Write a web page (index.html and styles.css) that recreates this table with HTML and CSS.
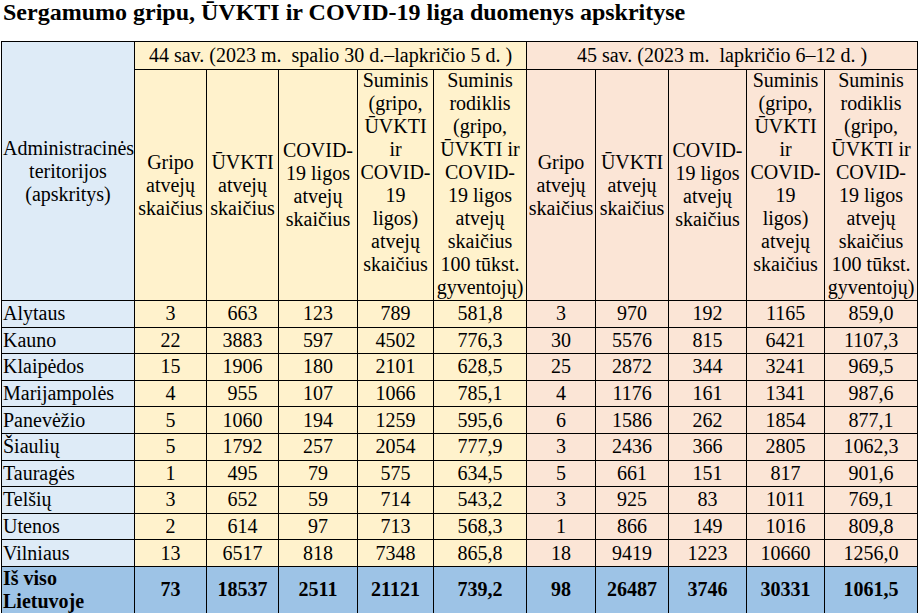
FILE: index.html
```html
<!DOCTYPE html>
<html lang="lt">
<head>
<meta charset="utf-8">
<title>Sergamumo gripu, ŪVKTI ir COVID-19 liga duomenys apskrityse</title>
<link rel="stylesheet" href="styles.css">
</head>
<body>
<div class="title">Sergamumo gripu, ŪVKTI ir COVID-19 liga duomenys apskrityse</div>
<table class="stats">
  <colgroup>
    <col class="w-reg">
    <col class="w-a"><col class="w-a"><col class="w-c"><col class="w-d"><col class="w-e">
    <col class="w-f"><col class="w-g"><col class="w-h"><col class="w-h"><col class="w-e">
  </colgroup>
  <tr class="r-week">
    <td class="reg hcell" rowspan="2">Administracinės<br>teritorijos<br>(apskritys)</td>
    <td class="w44 hcell" colspan="5">44 sav. (2023 m.&nbsp; spalio 30 d.–lapkričio 5 d. )</td>
    <td class="w45 hcell" colspan="5">45 sav. (2023 m.&nbsp; lapkričio 6–12 d. )</td>
  </tr>
  <tr class="r-head">
    <td class="w44 hcell">Gripo<br>atvejų<br>skaičius</td>
    <td class="w44 hcell">ŪVKTI<br>atvejų<br>skaičius</td>
    <td class="w44 hcell">COVID-<br>19 ligos<br>atvejų<br>skaičius</td>
    <td class="w44 hcell top"><div class="tall">Suminis<br>(gripo,<br>ŪVKTI<br>ir<br>COVID-<br>19<br>ligos)<br>atvejų<br>skaičius</div></td>
    <td class="w44 hcell top"><div class="tall">Suminis<br>rodiklis<br>(gripo,<br>ŪVKTI ir<br>COVID-<br>19 ligos<br>atvejų<br>skaičius<br>100 tūkst.<br>gyventojų)</div></td>
    <td class="w45 hcell">Gripo<br>atvejų<br>skaičius</td>
    <td class="w45 hcell">ŪVKTI<br>atvejų<br>skaičius</td>
    <td class="w45 hcell">COVID-<br>19 ligos<br>atvejų<br>skaičius</td>
    <td class="w45 hcell top"><div class="tall">Suminis<br>(gripo,<br>ŪVKTI<br>ir<br>COVID-<br>19<br>ligos)<br>atvejų<br>skaičius</div></td>
    <td class="w45 hcell top"><div class="tall">Suminis<br>rodiklis<br>(gripo,<br>ŪVKTI ir<br>COVID-<br>19 ligos<br>atvejų<br>skaičius<br>100 tūkst.<br>gyventojų)</div></td>
  </tr>
  <tr class="r-data"><td class="reg name">Alytaus</td><td class="w44">3</td><td class="w44">663</td><td class="w44">123</td><td class="w44">789</td><td class="w44">581,8</td><td class="w45">3</td><td class="w45">970</td><td class="w45">192</td><td class="w45">1165</td><td class="w45">859,0</td></tr>
  <tr class="r-data"><td class="reg name">Kauno</td><td class="w44">22</td><td class="w44">3883</td><td class="w44">597</td><td class="w44">4502</td><td class="w44">776,3</td><td class="w45">30</td><td class="w45">5576</td><td class="w45">815</td><td class="w45">6421</td><td class="w45">1107,3</td></tr>
  <tr class="r-data"><td class="reg name">Klaipėdos</td><td class="w44">15</td><td class="w44">1906</td><td class="w44">180</td><td class="w44">2101</td><td class="w44">628,5</td><td class="w45">25</td><td class="w45">2872</td><td class="w45">344</td><td class="w45">3241</td><td class="w45">969,5</td></tr>
  <tr class="r-data"><td class="reg name">Marijampolės</td><td class="w44">4</td><td class="w44">955</td><td class="w44">107</td><td class="w44">1066</td><td class="w44">785,1</td><td class="w45">4</td><td class="w45">1176</td><td class="w45">161</td><td class="w45">1341</td><td class="w45">987,6</td></tr>
  <tr class="r-data"><td class="reg name">Panevėžio</td><td class="w44">5</td><td class="w44">1060</td><td class="w44">194</td><td class="w44">1259</td><td class="w44">595,6</td><td class="w45">6</td><td class="w45">1586</td><td class="w45">262</td><td class="w45">1854</td><td class="w45">877,1</td></tr>
  <tr class="r-data"><td class="reg name">Šiaulių</td><td class="w44">5</td><td class="w44">1792</td><td class="w44">257</td><td class="w44">2054</td><td class="w44">777,9</td><td class="w45">3</td><td class="w45">2436</td><td class="w45">366</td><td class="w45">2805</td><td class="w45">1062,3</td></tr>
  <tr class="r-data"><td class="reg name">Tauragės</td><td class="w44">1</td><td class="w44">495</td><td class="w44">79</td><td class="w44">575</td><td class="w44">634,5</td><td class="w45">5</td><td class="w45">661</td><td class="w45">151</td><td class="w45">817</td><td class="w45">901,6</td></tr>
  <tr class="r-data"><td class="reg name">Telšių</td><td class="w44">3</td><td class="w44">652</td><td class="w44">59</td><td class="w44">714</td><td class="w44">543,2</td><td class="w45">3</td><td class="w45">925</td><td class="w45">83</td><td class="w45">1011</td><td class="w45">769,1</td></tr>
  <tr class="r-data"><td class="reg name">Utenos</td><td class="w44">2</td><td class="w44">614</td><td class="w44">97</td><td class="w44">713</td><td class="w44">568,3</td><td class="w45">1</td><td class="w45">866</td><td class="w45">149</td><td class="w45">1016</td><td class="w45">809,8</td></tr>
  <tr class="r-data"><td class="reg name">Vilniaus</td><td class="w44">13</td><td class="w44">6517</td><td class="w44">818</td><td class="w44">7348</td><td class="w44">865,8</td><td class="w45">18</td><td class="w45">9419</td><td class="w45">1223</td><td class="w45">10660</td><td class="w45">1256,0</td></tr>
  <tr class="r-total"><td class="tot name">Iš viso<br>Lietuvoje</td><td class="tot">73</td><td class="tot">18537</td><td class="tot">2511</td><td class="tot">21121</td><td class="tot">739,2</td><td class="tot">98</td><td class="tot">26487</td><td class="tot">3746</td><td class="tot">30331</td><td class="tot">1061,5</td></tr>
</table>
</body>
</html>
```
FILE: styles.css
```css
html, body {
  margin: 0;
  padding: 0;
  background: #ffffff;
  color: #000000;
  font-family: "Liberation Serif", "Times New Roman", serif;
}

.title {
  font-weight: bold;
  font-size: 24px;
  line-height: 24px;
  padding-left: 3px;
  height: 41px;
  white-space: nowrap;
}

.stats {
  border-collapse: collapse;
  table-layout: fixed;
  width: 917px;
  margin-left: 1px;
  font-size: 20px;
  line-height: 23px;
}

.w-reg { width: 133px; }
.w-a { width: 72px; }
.w-c { width: 79px; }
.w-d { width: 76px; }
.w-e { width: 93px; }
.w-f { width: 69px; }
.w-g { width: 73px; }
.w-h { width: 78px; }

.stats td {
  border: 1px solid #000000;
  padding: 0 1px;
  text-align: center;
  vertical-align: middle;
  white-space: nowrap;
  overflow: visible;
}

.r-week { height: 28px; }
.r-head { height: 231px; }
.r-data { height: 26.6px; }
.r-total { height: 47px; }

.reg { background: #deebf7; }
.w44 { background: #fff2cc; }
.w45 { background: #fbe5d6; }
.tot { background: #9dc3e6; font-weight: bold; }

.stats td.name { text-align: left; }
.stats td.top { vertical-align: top; }

.tall {
  height: 228px;
  margin-top: -1px;
}
```
